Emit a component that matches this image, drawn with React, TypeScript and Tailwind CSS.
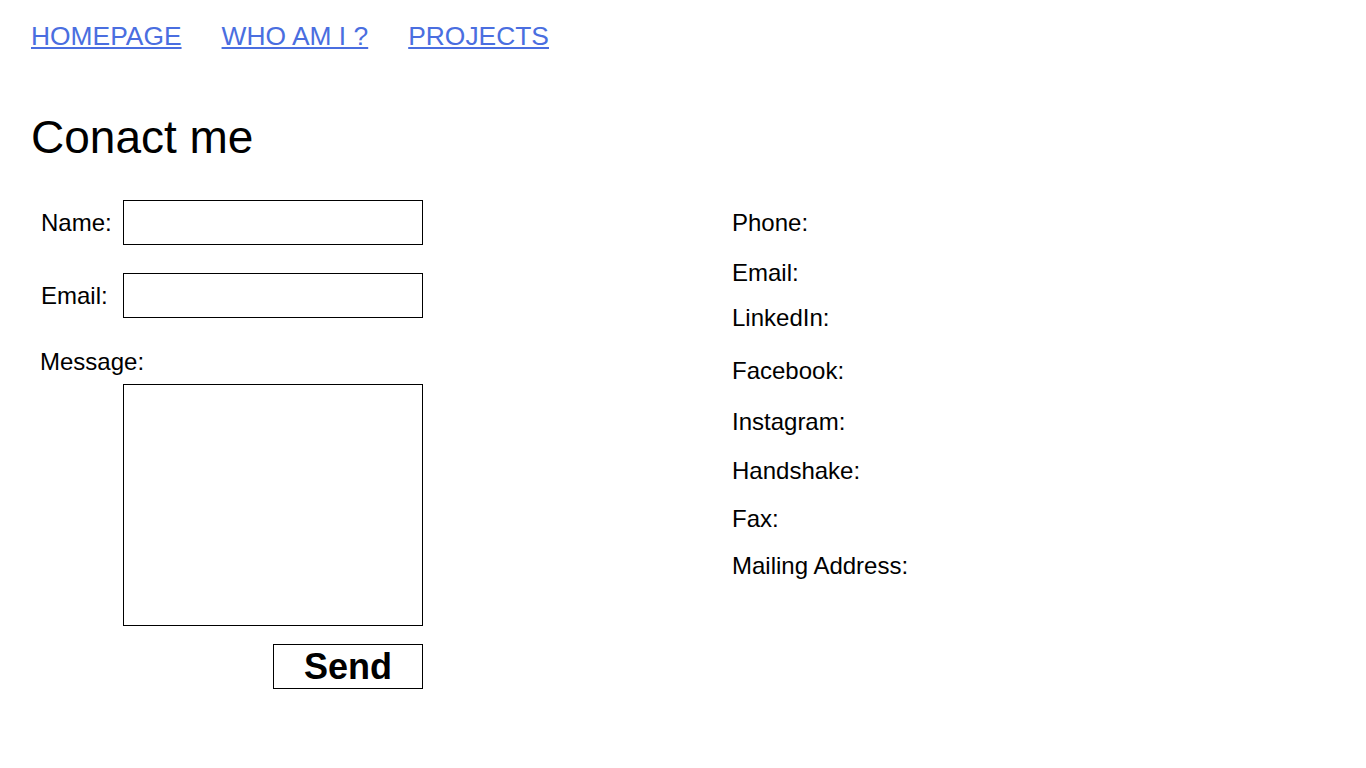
export default function App() {
  const font = { fontFamily: '"Liberation Sans", Arial, sans-serif' };
  return (
    <div className="min-h-screen bg-white pl-[31px] pt-[21px] text-black" style={font}>
      <nav className="flex gap-[40px] text-[26.4px] leading-[30px]">
        <a href="#" className="text-[#4a6ee0] underline">HOMEPAGE</a>
        <a href="#" className="text-[#4a6ee0] underline">WHO AM I ?</a>
        <a href="#" className="text-[#4a6ee0] underline">PROJECTS</a>
      </nav>

      <h1 className="mt-[60px] text-[46px] leading-[52px] font-normal">Conact me</h1>

      <div className="mt-[37px] flex items-start">
        <form className="ml-[9px] w-[383px] text-[24px] leading-[28px]" onSubmit={e => e.preventDefault()}>
          <div className="flex items-center">
            <label className="w-[83px] pl-[1px]">Name:</label>
            <input type="text" className="h-[45px] w-[300px] border border-black px-2 outline-none" />
          </div>
          <div className="mt-[28px] flex items-center">
            <label className="w-[83px] pl-[1px]">Email:</label>
            <input type="email" className="h-[45px] w-[300px] border border-black px-2 outline-none" />
          </div>
          <div className="mt-[30px]">Message:</div>
          <div className="mt-[8px] flex justify-end">
            <textarea className="h-[242px] w-[300px] resize-none border border-black p-2 outline-none" />
          </div>
          <div className="mt-[18px] flex justify-end">
            <button type="submit" className="h-[45px] w-[150px] border border-black bg-white text-[36px] font-bold leading-none">
              Send
            </button>
          </div>
        </form>

        <div className="ml-[309px] pt-[9px] text-[24px] leading-[28px]">
          <div>Phone:</div>
          <div className="mt-[22px]">Email:</div>
          <div className="mt-[17px]">LinkedIn:</div>
          <div className="mt-[25px]">Facebook:</div>
          <div className="mt-[23px]">Instagram:</div>
          <div className="mt-[21px]">Handshake:</div>
          <div className="mt-[20px]">Fax:</div>
          <div className="mt-[19px]">Mailing Address:</div>
        </div>
      </div>
    </div>
  );
}
